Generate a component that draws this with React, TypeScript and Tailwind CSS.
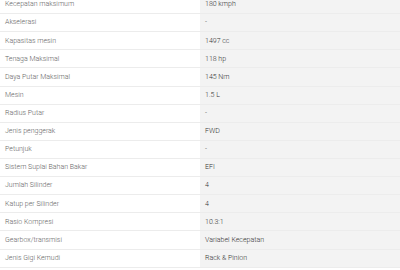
import React from 'react';

const specs: [string, string][] = [
  ['Kecepatan maksimum', '180 kmph'],
  ['Akselerasi', '-'],
  ['Kapasitas mesin', '1497 cc'],
  ['Tenaga Maksimal', '118 hp'],
  ['Daya Putar Maksimal', '145 Nm'],
  ['Mesin', '1.5 L'],
  ['Radius Putar', '-'],
  ['Jenis penggerak', 'FWD'],
  ['Petunjuk', '-'],
  ['Sistem Suplai Bahan Bakar', 'EFI'],
  ['Jumlah Silinder', '4'],
  ['Katup per Silinder', '4'],
  ['Rasio Kompresi', '10.3:1'],
  ['Gearbox/transmisi', 'Variabel Kecepatan'],
  ['Jenis Gigi Kemudi', 'Rack & Pinion'],
];

export default function App() {
  return (
    <div className="w-[400px] h-[270px] overflow-hidden bg-white font-['Roboto',sans-serif] text-[7px] font-light">
      <div className="-mt-[4px]">
        {specs.map(([label, value]) => (
          <div key={label} className="flex h-[18.12px] border-b border-[#ececec]">
            <div className="w-[200px] flex items-center pl-[5px] text-[#666]">{label}</div>
            <div className="flex-1 flex items-center pl-[5px] bg-[#f3f3f3] text-[#333]">{value}</div>
          </div>
        ))}
      </div>
    </div>
  );
}
